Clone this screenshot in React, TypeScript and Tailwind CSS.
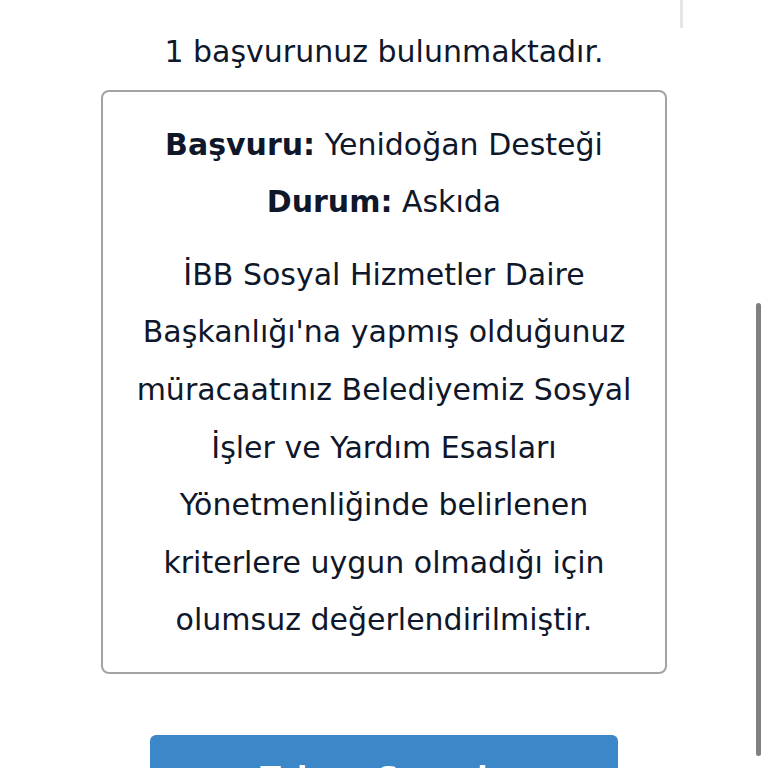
const lines = [
  "İBB Sosyal Hizmetler Daire",
  "Başkanlığı'na yapmış olduğunuz",
  "müracaatınız Belediyemiz Sosyal",
  "İşler ve Yardım Esasları",
  "Yönetmenliğinde belirlenen",
  "kriterlere uygun olmadığı için",
  "olumsuz değerlendirilmiştir.",
];

export default function App() {
  return (
    <div
      className="relative h-[768px] w-[768px] overflow-hidden bg-white text-[#0f172a]"
      style={{ fontFamily: '"DejaVu Sans", "Noto Sans", sans-serif' }}
    >
      {/* scrolled-off edge at the top */}
      <div className="absolute left-[680px] top-0 h-[28px] w-[3px] bg-[#e5e5e5]" />

      <div className="flex flex-col items-center pt-[23px]">
        <p className="text-[30px] leading-[57.6px]">1 başvurunuz bulunmaktadır.</p>

        <div className="mt-[9px] w-[566px] rounded-lg border-2 border-[#a3a3a3] pt-[24px] pb-[23px] text-center text-[30px] leading-[57.6px]">
          <p>
            <span className="font-bold">Başvuru:</span> Yenidoğan Desteği
          </p>
          <p>
            <span className="font-bold">Durum:</span> Askıda
          </p>
          <div className="mt-[15px]">
            {lines.map((l, i) => (
              <p key={i} className="whitespace-nowrap">{l}</p>
            ))}
          </div>
        </div>

        <button className="mt-[61px] h-[70px] w-[468px] rounded-md bg-[#3b87c8] pt-[14px] text-[30px] font-semibold leading-[57.6px] text-white">
          Tekrar Sorgula
        </button>
      </div>

      {/* overlay scrollbar */}
      <div className="absolute left-[756px] top-[303px] h-[453px] w-[5px] rounded-full bg-[#808080]" />
    </div>
  );
}
